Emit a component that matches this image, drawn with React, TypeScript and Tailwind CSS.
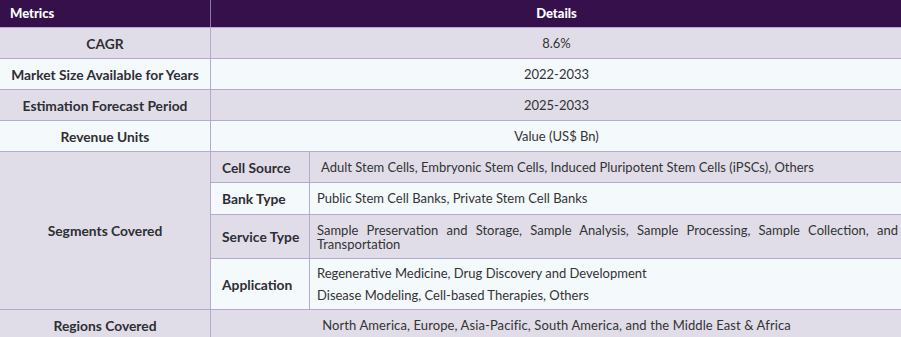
import React from 'react';

const bd = 'border border-[#b4a9cf]';
const lbl = 'font-bold text-[13.8px] text-[#2e2e33]';

const rows = [
  { label: 'CAGR', value: '8.6%', bg: 'bg-[#e0dde9]' },
  { label: 'Market Size Available for Years', value: '2022-2033', bg: 'bg-[#f4f9fc]' },
  { label: 'Estimation Forecast Period', value: '2025-2033', bg: 'bg-[#e0dde9]' },
  { label: 'Revenue Units', value: 'Value (US$ Bn)', bg: 'bg-[#f4f9fc]' },
];

export default function App() {
  return (
    <div className="w-[901px] h-[337px] overflow-hidden bg-white" style={{ fontFamily: 'Lato, "Open Sans", sans-serif' }}>
      <table className="w-[903px] -ml-px -mt-px table-fixed border-collapse text-[13px] leading-[15px] text-[#333]">
        <colgroup>
          <col className="w-[211px]" />
          <col className="w-[99px]" />
          <col className="w-[593px]" />
        </colgroup>
        <tbody>
          <tr className="h-[28px] bg-[#36104a] text-white">
            <th className={`${bd} border-[#36104a] border-r-[#8a7aa8] text-left pl-[10px] font-black`}>Metrics</th>
            <th colSpan={2} className={`${bd} border-[#36104a] text-center font-black`}>Details</th>
          </tr>
          {rows.map((r) => (
            <tr key={r.label} className={`h-[31px] ${r.bg}`}>
              <td className={`${bd} text-center ${lbl}`}>{r.label}</td>
              <td colSpan={2} className={`${bd} text-center`}>{r.value}</td>
            </tr>
          ))}
          <tr className="h-[31px] bg-[#e0dde9]">
            <td rowSpan={4} className={`${bd} text-center ${lbl} bg-[#e0dde9]`}>Segments Covered</td>
            <td className={`${bd} pl-[11px] ${lbl}`}>Cell Source</td>
            <td className={`${bd} pl-[11px]`}>Adult Stem Cells, Embryonic Stem Cells, Induced Pluripotent Stem Cells (iPSCs), Others</td>
          </tr>
          <tr className="h-[32px] bg-[#f4f9fc]">
            <td className={`${bd} pl-[11px] ${lbl}`}>Bank Type</td>
            <td className={`${bd} pl-[7px]`}>Public Stem Cell Banks, Private Stem Cell Banks</td>
          </tr>
          <tr className="h-[44px] bg-[#e0dde9]">
            <td className={`${bd} pl-[11px] ${lbl}`}>Service Type</td>
            <td className={`${bd} pl-[7px] pr-[4px] text-justify leading-[14px]`}>
              Sample Preservation and Storage, Sample Analysis, Sample Processing, Sample Collection, and Transportation
            </td>
          </tr>
          <tr className="h-[51px] bg-[#f4f9fc]">
            <td className={`${bd} pl-[11px] ${lbl}`}>Application</td>
            <td className={`${bd} pl-[7px]`}>
              <p className="mb-[7px]">Regenerative Medicine, Drug Discovery and Development</p>
              <p>Disease Modeling, Cell-based Therapies, Others</p>
            </td>
          </tr>
          <tr className="h-[31px] bg-[#e0dde9]">
            <td className={`${bd} text-center ${lbl}`}>Regions Covered</td>
            <td colSpan={2} className={`${bd} text-center tracking-[0.1px]`}>North America, Europe, Asia-Pacific, South America, and the Middle East &amp; Africa</td>
          </tr>
        </tbody>
      </table>
    </div>
  );
}
